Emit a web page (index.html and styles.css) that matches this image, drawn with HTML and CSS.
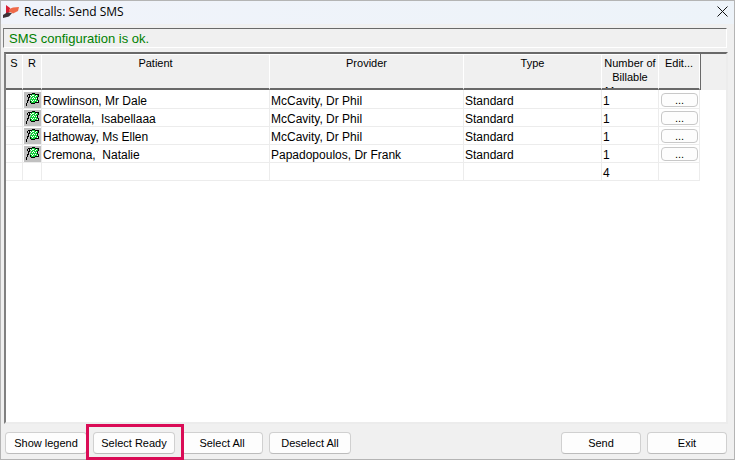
FILE: index.html
```html
<!DOCTYPE html>
<html lang="en">
<head>
<meta charset="utf-8">
<title>Recalls: Send SMS</title>
<link rel="stylesheet" href="styles.css">
</head>
<body>
<svg class="defs" aria-hidden="true">
  <defs>
    <symbol id="flag" viewBox="0 0 17 16" shape-rendering="crispEdges">
      <rect width="17" height="16" fill="#c0c0c0"/>
      <path d="M6 3h2v-1h3v1h3v2h-1v3h1v2h-3v1h-4v-1h-1v-3h1v-2h-1z" fill="#12d03a"/>
      <path d="M6 3h1v1h-1zM8 3h2v1h-2zM12 3h1v1h-1zM7 4h1v1h-1zM11 4h1v1h-1zM9 5h1v1h-1zM12 6h1v1h-1zM8 6h1v1h-1zM10 6h1v1h-1zM7 8h1v1h-1zM9 8h1v1h-1zM11 8h1v1h-1zM13 9h1v1h-1zM8 9h1v1h-1z" fill="#fff"/>
      <path d="M4 2h4v1h-4zM8 1h3v1h-3zM11 2h4v1h-4zM14 3h1v2h-1zM13 5h1v3h-1zM14 8h1v3h-1zM11 10h3v1h-3zM7 11h4v1h-4zM6 9h1v2h-1zM3 3h1v2h-1zM5 3h1v3h-1zM4 5h1v4h-1zM3 8h1v3h-1zM2 11h1v3h-1z" fill="#000"/>
    </symbol>
  </defs>
</svg>
<div class="window">
  <header class="titlebar">
    <svg class="logo" viewBox="0 0 16 13" aria-hidden="true">
      <path d="M3 0l4 3v4l-4 2z" fill="#d81f35"/>
      <path d="M6 4l4-1.500 6-.5-1 4-5 2.500-4-2z" fill="#ee6a4a"/>
      <path d="M0 10l4-2.500 5 .5-3 3.500-6 1.500z" fill="#3c3338"/>
    </svg>
    <h1 class="title">Recalls: Send SMS</h1>
    <button class="close" type="button" aria-label="Close">
      <svg viewBox="0 0 11 11" aria-hidden="true"><path d="M.5.5l10 10M10.500.5l-10 10" stroke="#111" fill="none"/></svg>
    </button>
  </header>
  <p class="status">SMS configuration is ok.</p>
  <main class="list">
    <table>
      <colgroup>
        <col class="c-s"><col class="c-r"><col><col class="c-provider"><col class="c-type"><col class="c-number"><col class="c-edit"><col class="c-rest">
      </colgroup>
      <thead>
        <tr>
          <th><div>S</div></th><th><div>R</div></th><th><div>Patient</div></th><th><div>Provider</div></th><th><div>Type</div></th><th><div>Number of Billable Messages</div></th><th><div>Edit...</div></th><td class="rest"></td>
        </tr>
      </thead>
      <tbody>
        <tr><td></td><td class="flag"><svg><use href="#flag"/></svg></td><td>Rowlinson, Mr Dale</td><td>McCavity, Dr Phil</td><td>Standard</td><td>1</td><td class="edit"><button type="button">...</button></td></tr>
        <tr><td></td><td class="flag"><svg><use href="#flag"/></svg></td><td>Coratella,&nbsp; Isabellaaa</td><td>McCavity, Dr Phil</td><td>Standard</td><td>1</td><td class="edit"><button type="button">...</button></td></tr>
        <tr><td></td><td class="flag"><svg><use href="#flag"/></svg></td><td>Hathoway, Ms Ellen</td><td>McCavity, Dr Phil</td><td>Standard</td><td>1</td><td class="edit"><button type="button">...</button></td></tr>
        <tr><td></td><td class="flag"><svg><use href="#flag"/></svg></td><td>Cremona,&nbsp; Natalie</td><td>Papadopoulos, Dr Frank</td><td>Standard</td><td>1</td><td class="edit"><button type="button">...</button></td></tr>
        <tr><td></td><td></td><td></td><td></td><td></td><td>4</td><td></td></tr>
      </tbody>
    </table>
  </main>
  <footer class="actions">
    <button type="button">Show legend</button>
    <span class="marked"><button type="button">Select Ready</button></span>
    <button type="button">Select All</button>
    <button type="button">Deselect All</button>
    <span class="spacer"></span>
    <button class="narrow" type="button">Send</button>
    <button class="narrow" type="button">Exit</button>
  </footer>
</div>
</body>
</html>
```
FILE: styles.css
```css
* { box-sizing: border-box; }

body {
  margin: 0;
  font-family: "Liberation Sans", Arial, sans-serif;
  color: #000;
}

.defs { position: absolute; width: 0; height: 0; }

.window {
  display: flex;
  flex-direction: column;
  height: 100vh;
  background: #f0f0f0;
  border: 1px solid #b4b4b4;
}

.titlebar {
  display: flex;
  align-items: center;
  height: 23px;
  padding: 0 6px 2px 2px;
  background: linear-gradient(90deg, #f0f3fa, #edf3f9);
}

.logo { width: 16px; height: 13px; }

.title {
  flex: 1;
  margin: 0 0 0 5px;
  font: 12px/20px "Open Sans", "Noto Sans", sans-serif;
}

.close {
  display: flex;
  padding: 0;
  border: 0;
  background: none;
}

.close svg { width: 11px; height: 11px; }

.status {
  height: 20px;
  margin: 4px 7px 0 2px;
  padding-left: 5px;
  border: 1px solid;
  border-color: #696969 #fff #fff #808080;
  font-size: 13px;
  line-height: 19px;
  color: #008000;
}

.list {
  flex: 1;
  min-height: 0;
  margin: 4px 6px 0 3px;
  overflow: hidden;
  background: #fff;
  border: 2px solid;
  border-color: #696969 #ececec #ececec #808080;
}

table {
  width: 100%;
  table-layout: fixed;
  border-collapse: separate;
  border-spacing: 0;
}

.c-s { width: 17px; }
.c-r { width: 19px; }
.c-provider { width: 194px; }
.c-type { width: 138px; }
.c-number { width: 57px; }
.c-edit { width: 41px; }
.c-rest { width: 26px; }

th {
  padding: 0;
  background: #f0f0f0;
  border-top: 1px solid #fff;
  border-right: 1px solid #fff;
  border-bottom: 2px solid #696969;
  font-size: 11px;
  font-weight: 400;
  line-height: 14px;
  vertical-align: top;
}

th div {
  height: 33px;
  padding-top: 1px;
  overflow: hidden;
}

.rest {
  background: #f0f0f0;
  border-left: 1px solid #696969;
}

tbody td {
  height: 18px;
  padding: 3px 0 0 1px;
  border-right: 1px solid #ececec;
  border-bottom: 1px solid #ececec;
  font-size: 12px;
  line-height: 14px;
  white-space: nowrap;
}

tbody tr:first-child td { height: 19px; }

tbody .flag { padding-top: 1px; }

.flag svg {
  display: block;
  width: 17px;
  height: 16px;
}

tbody .edit { padding: 1px 1px 0 2px; }

.edit button {
  display: block;
  width: 100%;
  height: 14px;
  padding: 0;
  border: 1px solid #c8c8c8;
  border-radius: 4px;
  background: #fdfdfd;
  font: 11px/12px "Liberation Sans", Arial, sans-serif;
}

.actions {
  display: flex;
  gap: 6px;
  height: 35px;
  padding: 8px 7px 5px 4px;
}

.actions button {
  width: 82px;
  height: 22px;
  padding: 0;
  border: 1px solid #d0d0d0;
  border-bottom-color: #bcbcbc;
  border-radius: 4px;
  background: #fdfdfd;
  font: 11px/20px "Liberation Sans", Arial, sans-serif;
  color: #000;
}

.actions .narrow { width: 80px; }

.marked { position: relative; }

.marked::after {
  content: "";
  position: absolute;
  inset: -8px -9px -6px -7px;
  border: 3px solid #da0c56;
  pointer-events: none;
}

.spacer { flex: 1; }
```
